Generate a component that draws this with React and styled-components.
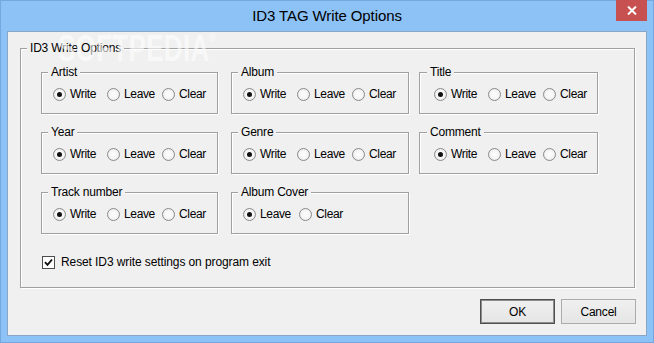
import React from "react";
import styled, { createGlobalStyle } from "styled-components";

const GlobalStyle = createGlobalStyle`
  html, body { margin: 0; padding: 0; }
  body {
    width: 654px;
    height: 343px;
    overflow: hidden;
    font-family: "Liberation Sans", Arial, sans-serif;
    font-size: 12px;
    color: #000;
  }
`;

const Window = styled.div`
  position: relative;
  width: 654px;
  height: 343px;
  box-sizing: border-box;
  background: #8cc2f6;
  box-shadow: inset 0 0 0 1px #74a8de;
  display: flex;
  flex-direction: column;
`;

const TitleBar = styled.div`
  height: 31px;
  flex: none;
  display: grid;
  grid-template-columns: 1fr auto 1fr;
  align-items: start;
`;

const Title = styled.div`
  grid-column: 2;
  font-size: 15px;
  line-height: 31px;
  color: #000;
  letter-spacing: -0.1px;
`;

const CloseSlot = styled.div`
  grid-column: 3;
  justify-self: end;
  padding-right: 7px;
`;

const CloseButton = styled.div`
  width: 31px;
  height: 21px;
  background: #c75050;
  display: flex;
  align-items: center;
  justify-content: center;
`;

const Watermark = styled.div`
  position: absolute;
  left: 58px;
  top: 31px;
  font-family: "Liberation Sans", Arial, sans-serif;
  font-weight: bold;
  font-size: 36px;
  line-height: 36px;
  color: rgba(255, 255, 255, 0.6);
  transform: scaleX(0.72);
  transform-origin: left top;
  pointer-events: none;
  letter-spacing: 0.5px;
  sup { font-size: 12px; vertical-align: top; line-height: 12px; }
`;

const Client = styled.div`
  flex: 1;
  margin: 0 7px 7px;
  background: #f0f0f0;
  border: 1px solid #8aa6c6;
  padding: 16px 11px 0 12px;
  display: flex;
  flex-direction: column;
`;

const Group = styled.div`
  position: relative;
  box-sizing: border-box;
  height: 240px;
  border: 1px solid #a0a0a0;
  box-shadow: inset 1px 1px 0 #fff, 1px 1px 0 #fff;
  padding: 23px 0 0 20px;
`;

const Legend = styled.span`
  position: absolute;
  top: -8px;
  left: ${(p) => p.$left ?? 6}px;
  padding: 0 3px;
  background: #f0f0f0;
  line-height: 14px;
  font-size: 12px;
  letter-spacing: -0.2px;
  white-space: nowrap;
`;

const BoxGrid = styled.div`
  display: grid;
  grid-template-columns: 190px 188px 179px;
  grid-auto-rows: 42px;
  row-gap: 18px;
`;

const SubBox = styled.div`
  position: relative;
  box-sizing: border-box;
  width: ${(p) => p.$w}px;
  height: 42px;
  border: 1px solid #a0a0a0;
  box-shadow: inset 1px 1px 0 #fff, 1px 1px 0 #fff;
  padding: 13px 0 0 ${(p) => p.$pl}px;
`;

const RadioRow = styled.div`
  display: grid;
  grid-template-columns: ${(p) => p.$cols};
  align-items: center;
  height: 16px;
`;

const Option = styled.label`
  display: flex;
  align-items: center;
  gap: 4px;
  white-space: nowrap;
  letter-spacing: -0.35px;
`;

const RadioDot = styled.span`
  box-sizing: border-box;
  width: 13px;
  height: 13px;
  border-radius: 50%;
  border: 1px solid #8a8b8b;
  background: radial-gradient(circle at 50% 50%, #ffffff 0%, #f4f4f4 55%, #d8d8d8 100%);
  display: flex;
  align-items: center;
  justify-content: center;
  flex: none;
  &::after {
    content: "";
    width: 5px;
    height: 5px;
    border-radius: 50%;
    background: ${(p) => (p.$on ? "#111" : "transparent")};
  }
`;

const CheckRow = styled.label`
  display: flex;
  align-items: center;
  gap: 6px;
  height: 16px;
  margin-top: 20px;
  padding-left: 1px;
  white-space: nowrap;
  letter-spacing: -0.1px;
`;

const CheckBox = styled.span`
  box-sizing: border-box;
  width: 13px;
  height: 13px;
  border: 1px solid #4d4d4d;
  background: #fff;
  display: flex;
  align-items: center;
  justify-content: center;
  flex: none;
`;

const Footer = styled.div`
  display: flex;
  justify-content: flex-end;
  gap: 6px;
  margin-top: 11px;
  margin-right: -1px;
`;

const Button = styled.div`
  box-sizing: border-box;
  width: 75px;
  height: 25px;
  display: flex;
  align-items: center;
  justify-content: center;
  font-size: 12px;
  letter-spacing: -0.2px;
  background: linear-gradient(#f0f0f0, #e5e5e5);
  border: 1px solid ${(p) => (p.$default ? "#4f4f4f" : "#acacac")};
  box-shadow: ${(p) => (p.$default ? "inset 0 0 0 1px #8c8c8c" : "none")};
`;

const Radio = ({ label, on }) => (
  <Option>
    <RadioDot $on={on} />
    <span>{label}</span>
  </Option>
);

const WLC = ["Write", "Leave", "Clear"];

const boxes = [
  { title: "Artist", w: 177, pl: 11, opts: WLC, cols: "54px 55px auto" },
  { title: "Album", w: 178, pl: 11, opts: WLC, cols: "54px 55px auto" },
  { title: "Title", w: 179, pl: 14, lg: 7, opts: WLC, cols: "54px 55px auto" },
  { title: "Year", w: 177, pl: 11, opts: WLC, cols: "54px 55px auto" },
  { title: "Genre", w: 178, pl: 11, opts: WLC, cols: "54px 55px auto" },
  { title: "Comment", w: 179, pl: 14, lg: 7, opts: WLC, cols: "54px 55px auto" },
  { title: "Track number", w: 177, pl: 11, opts: WLC, cols: "54px 55px auto" },
  { title: "Album Cover", w: 178, pl: 11, opts: ["Leave", "Clear"], cols: "56px auto" },
];

export default function App() {
  return (
    <>
      <GlobalStyle />
      <Window>
        <TitleBar>
          <Title>ID3 TAG Write Options</Title>
          <CloseSlot>
            <CloseButton>
              <svg width="10" height="9" viewBox="0 0 10 9">
                <path d="M1 0.5 L9 8.5 M9 0.5 L1 8.5" stroke="#fff" strokeWidth="2" fill="none" />
              </svg>
            </CloseButton>
          </CloseSlot>
        </TitleBar>
        <Client>
          <Group>
            <Legend>ID3 Write Options</Legend>
            <BoxGrid>
              {boxes.map((b) => (
                <SubBox key={b.title} $w={b.w} $pl={b.pl}>
                  <Legend $left={b.lg}>{b.title}</Legend>
                  <RadioRow $cols={b.cols}>
                    {b.opts.map((o, i) => (
                      <Radio key={o} label={o} on={i === 0} />
                    ))}
                  </RadioRow>
                </SubBox>
              ))}
            </BoxGrid>
            <CheckRow>
              <CheckBox>
                <svg width="9" height="9" viewBox="0 0 9 9">
                  <path d="M1 4.2 L3.5 6.8 L8 1.5" stroke="#111" strokeWidth="1.9" fill="none" />
                </svg>
              </CheckBox>
              <span>Reset ID3 write settings on program exit</span>
            </CheckRow>
          </Group>
          <Footer>
            <Button $default>OK</Button>
            <Button>Cancel</Button>
          </Footer>
        </Client>
        <Watermark aria-hidden="true">
          SOFTPEDIA<sup>®</sup>
        </Watermark>
      </Window>
    </>
  );
}
